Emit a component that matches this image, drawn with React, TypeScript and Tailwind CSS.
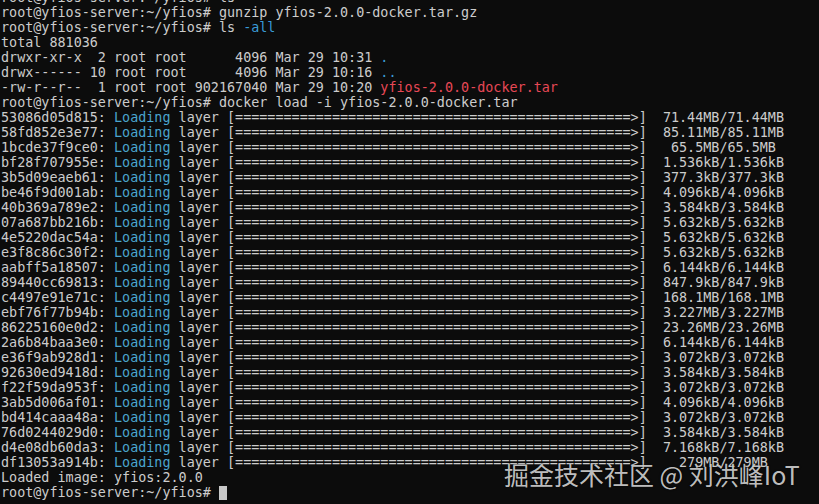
const prompt = 'root@yfios-server:~/yfios# ';

const layers: [string, string][] = [
  ['53086d05d815', '71.44MB'],
  ['58fd852e3e77', '85.11MB'],
  ['1bcde37f9ce0', '65.5MB'],
  ['bf28f707955e', '1.536kB'],
  ['3b5d09eaeb61', '377.3kB'],
  ['be46f9d001ab', '4.096kB'],
  ['40b369a789e2', '3.584kB'],
  ['07a687bb216b', '5.632kB'],
  ['4e5220dac54a', '5.632kB'],
  ['e3f8c86c30f2', '5.632kB'],
  ['aabff5a18507', '6.144kB'],
  ['89440cc69813', '847.9kB'],
  ['c4497e91e71c', '168.1MB'],
  ['ebf76f77b94b', '3.227MB'],
  ['86225160e0d2', '23.26MB'],
  ['2a6b84baa3e0', '6.144kB'],
  ['e36f9ab928d1', '3.072kB'],
  ['92630ed9418d', '3.584kB'],
  ['f22f59da953f', '3.072kB'],
  ['3ab5d006af01', '4.096kB'],
  ['bd414caaa48a', '3.072kB'],
  ['76d0244029d0', '3.584kB'],
  ['d4e08db60da3', '7.168kB'],
  ['df13053a914b', '279MB'],
];

const bar = '[' + '='.repeat(49) + '>]';

export default function App() {
  return (
    <div className="relative w-[819px] h-[504px] overflow-hidden bg-[#0c0c0c]">
      {/* terminal buffer, bottom aligned like a scrolled console */}
      <div className="flex flex-col justify-end h-full pb-[4px] pl-px overflow-hidden font-['DejaVu_Sans_Mono',monospace] text-[13.42px] leading-[15px] text-[#cccccc] whitespace-pre">
        <div>{prompt}ls</div>
        <div>{prompt}gunzip yfios-2.0.0-docker.tar.gz</div>
        <div>
          {prompt}ls <span className="text-[#3a9bd6]">-all</span>
        </div>
        <div>total 881036</div>
        <div>
          drwxr-xr-x  2 root root      4096 Mar 29 10:31 <span className="text-[#3a9bd6]">.</span>
        </div>
        <div>
          drwx------ 10 root root      4096 Mar 29 10:16 <span className="text-[#3a9bd6]">..</span>
        </div>
        <div>
          -rw-r--r--  1 root root 902167040 Mar 29 10:20{' '}
          <span className="text-[#e74856]">yfios-2.0.0-docker.tar</span>
        </div>
        <div>{prompt}docker load -i yfios-2.0.0-docker.tar</div>
        {layers.map(([id, size]) => (
          <div key={id}>
            {id}: <span className="text-[#4aa5cf]">Loading</span> layer {bar} {size.padStart(8)}/{size}
          </div>
        ))}
        <div>Loaded image: yfios:2.0.0</div>
        <div className="flex items-center">
          {prompt}
          <span className="inline-block w-[8px] h-[14px] bg-[#c8c8c8]" />
        </div>
      </div>

      {/* site watermark */}
      <div className="absolute left-[504px] top-[457px] font-['Noto_Sans_CJK_SC',sans-serif] text-[25px] leading-[34px] text-[#d6d6d6]/90 whitespace-nowrap [text-shadow:0_0_2px_rgba(0,0,0,0.6)]">
        掘金技术社区 @ 刘洪峰IoT
      </div>
    </div>
  );
}
